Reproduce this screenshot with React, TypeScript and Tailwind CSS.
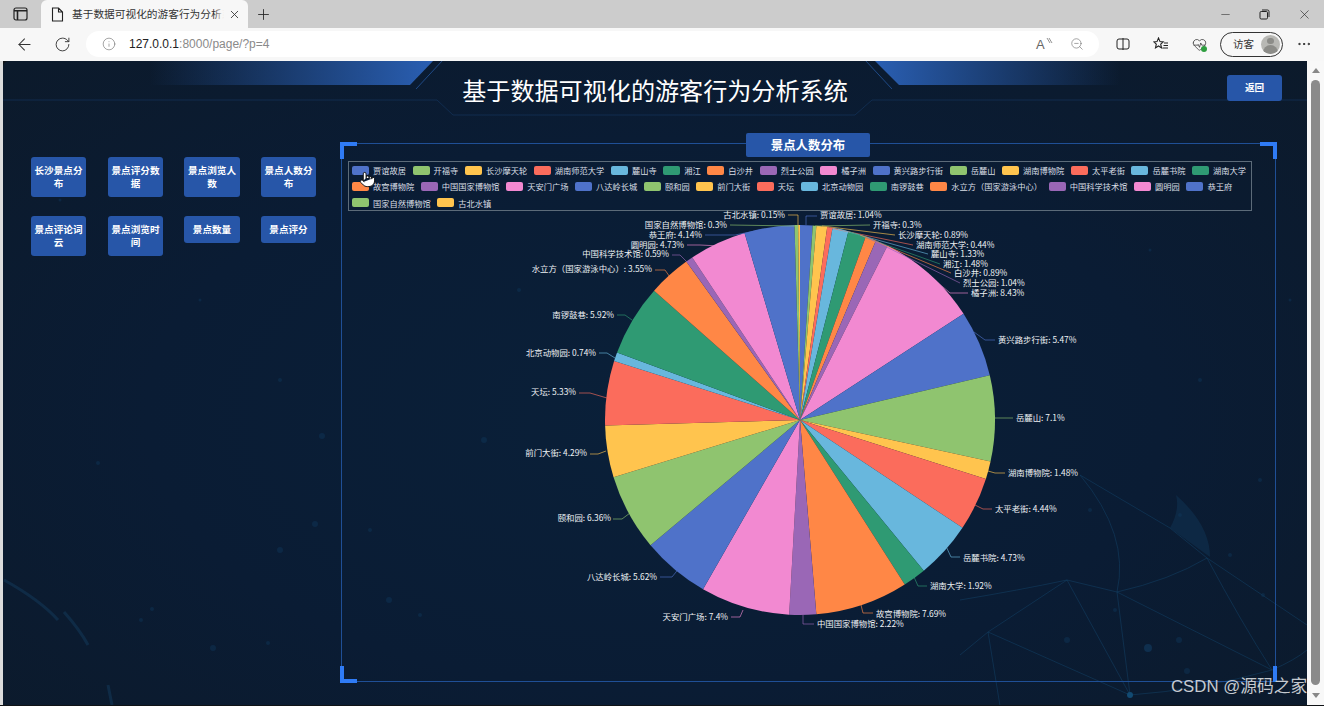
import React from "react";
import { ArrowLeft, RotateCw, Info, X, Plus, Minus, ZoomOut, MoreHorizontal, HeartPulse, Pointer } from "lucide-react";

const COLORS = ["#4f72c9", "#8fc46f", "#ffc44e", "#fb6c5c", "#68b7dd", "#2f9a73", "#ff8746", "#9a67b6", "#f289d1"];

type L = { n: string; v: number; x: number; y: number; a: "start" | "end"; p: string };
const DATA: L[] = [
  { n: "贾谊故居", v: 1.04, x: 820, y: 215, a: "start", p: "806,225 806,216 817,216" },
  { n: "开福寺", v: 0.3, x: 873, y: 225, a: "start", p: "815,226 870,225" },
  { n: "长沙摩天轮", v: 0.89, x: 898, y: 235, a: "start", p: "822,226 895,235" },
  { n: "湖南师范大学", v: 0.44, x: 916, y: 244.5, a: "start", p: "830,228 913,245" },
  { n: "麓山寺", v: 1.33, x: 931, y: 254, a: "start", p: "838,229 928,254" },
  { n: "湘江", v: 1.48, x: 943, y: 264, a: "start", p: "850,232 940,264" },
  { n: "白沙井", v: 0.89, x: 954, y: 273, a: "start", p: "860,235 951,273" },
  { n: "烈士公园", v: 1.04, x: 963, y: 283, a: "start", p: "868,238 960,283" },
  { n: "橘子洲", v: 8.43, x: 971, y: 293, a: "start", p: "915,263 950,293 968,293" },
  { n: "黄兴路步行街", v: 5.47, x: 998, y: 340, a: "start", p: "974,332 985,340 995,340" },
  { n: "岳麓山", v: 7.1, x: 1016, y: 418, a: "start", p: "995,418 1013,418" },
  { n: "湖南博物院", v: 1.48, x: 1008, y: 473, a: "start", p: "988,471 995,473 1005,473" },
  { n: "太平老街", v: 4.44, x: 995, y: 509, a: "start", p: "975,505 983,509 992,509" },
  { n: "岳麓书院", v: 4.73, x: 963, y: 558, a: "start", p: "945,544 951,557 960,557" },
  { n: "湖南大学", v: 1.92, x: 930, y: 586, a: "start", p: "914,577 918,586 927,586" },
  { n: "故宫博物院", v: 7.69, x: 876, y: 614, a: "start", p: "861,605 863,613 873,613" },
  { n: "中国国家博物馆", v: 2.22, x: 817, y: 624, a: "start", p: "803,615 803,624 814,624" },
  { n: "天安门广场", v: 7.4, x: 728, y: 617, a: "end", p: "743,610 740,617 731,617" },
  { n: "八达岭长城", v: 5.62, x: 657, y: 577, a: "end", p: "680,567 672,577 660,577" },
  { n: "颐和园", v: 6.36, x: 611, y: 518, a: "end", p: "630,513 622,519 613,519" },
  { n: "前门大街", v: 4.29, x: 587, y: 453, a: "end", p: "606,451 598,454 590,454" },
  { n: "天坛", v: 5.33, x: 576, y: 392, a: "end", p: "607,398 590,393 579,393" },
  { n: "北京动物园", v: 0.74, x: 596, y: 353, a: "end", p: "615,358 607,353 599,353" },
  { n: "南锣鼓巷", v: 5.92, x: 614, y: 315, a: "end", p: "632,320 625,315 617,315" },
  { n: "水立方（国家游泳中心）", v: 3.55, x: 652, y: 269, a: "end", p: "672,280 665,270 655,270" },
  { n: "中国科学技术馆", v: 0.59, x: 669, y: 254, a: "end", p: "690,265 680,255 672,255" },
  { n: "圆明园", v: 4.73, x: 684, y: 245, a: "end", p: "720,246 700,245 687,245" },
  { n: "恭王府", v: 4.14, x: 702, y: 235, a: "end", p: "765,229 735,235 705,235" },
  { n: "国家自然博物馆", v: 0.3, x: 727, y: 225, a: "end", p: "795,226 730,225" },
  { n: "古北水镇", v: 0.15, x: 785, y: 215, a: "end", p: "798,225 798,215 788,215" },
];

const CX = 800, CY = 420, R = 195;
const total = DATA.reduce((s, d) => s + d.v, 0);
const pt = (t: number) => {
  const a = (t / total) * Math.PI * 2;
  return `${(CX + R * Math.sin(a)).toFixed(2)} ${(CY - R * Math.cos(a)).toFixed(2)}`;
};
let acc = 0;
const SLICES = DATA.map((d, i) => {
  const s = acc;
  acc += d.v;
  const large = d.v / total > 0.5 ? 1 : 0;
  return { d: `M${CX} ${CY}L${pt(s)}A${R} ${R} 0 ${large} 1 ${pt(acc)}Z`, c: COLORS[i % 9] };
});

const BTN = "bg-[#2756a8] rounded-[3px] text-white font-bold text-[9.6px] leading-[13.5px] text-center px-[3px] flex items-center justify-center";
const FONT = "font-['Noto_Sans_CJK_SC','Noto_Sans',sans-serif]";

const NAV = [
  { t: "长沙景点分布", c: "h-[40px] w-[55px]" },
  { t: "景点评分数据", c: "h-[40px] w-[55px]" },
  { t: "景点浏览人数", c: "h-[40px] w-[56px]" },
  { t: "景点人数分布", c: "h-[40px] w-[55px]" },
  { t: "景点评论词云", c: "h-[40px] w-[55px]" },
  { t: "景点浏览时间", c: "h-[40px] w-[55px]" },
  { t: "景点数量", c: "h-[27px] w-[56px]" },
  { t: "景点评分", c: "h-[27px] w-[55px]" },
];

const STARS: [number, number, number][] = [
  [322, 436, 3], [315, 524, 3], [280, 550, 3], [152, 609, 2], [141, 620, 2], [213, 648, 3], [268, 643, 2], [98, 463, 2], [484, 440, 3],
  [389, 600, 3], [420, 615, 2], [370, 530, 2], [519, 290, 2], [1260, 480, 2], [1090, 510, 2], [1180, 515, 2], [1230, 555, 2], [1263, 595, 2],
  [1067, 640, 3], [1179, 640, 3], [1187, 671, 3], [1115, 610, 2], [60, 200, 1.5], [200, 300, 1.5], [280, 380, 2], [1290, 300, 1.5], [1150, 250, 1.5], [1200, 380, 2],
];

function Corner({ cls }: { cls: string }) {
  return <div className={`absolute w-[17px] h-[17px] border-[#2f7bf5] ${cls}`} />;
}

export default function App() {
  return (
    <div className={`w-[1324px] h-[706px] overflow-hidden flex flex-col bg-[#101316] relative ${FONT}`}>
      {/* tab strip */}
      <div className="h-[28px] bg-[#cccccc] flex items-stretch shrink-0">
        <div className="w-[41px] flex items-center justify-center">
          <svg width="15" height="14" viewBox="0 0 15 14" fill="none" stroke="#222" strokeWidth="1.2">
            <rect x="1" y="1" width="13" height="12" rx="2" />
            <path d="M1 3.8h13M4.5 3.8V13" strokeWidth="1.6" />
          </svg>
        </div>
        <div className="w-[207px] bg-[#f7f7f7] rounded-t-[6px] flex items-center pl-[10px]">
          <svg width="13" height="15" viewBox="0 0 13 15" fill="none" stroke="#222" strokeWidth="1.1" className="mr-[8px] shrink-0">
            <path d="M1.5 1h6l4 4v9h-10zM7.5 1v4h4" />
          </svg>
          <div className="relative w-[152px] overflow-hidden whitespace-nowrap text-[10.7px] text-[#333] shrink-0">
            基于数据可视化的游客行为分析系统
            <div className="absolute right-0 top-0 bottom-0 w-[10px] bg-gradient-to-r from-transparent to-[#f7f7f7]" />
          </div>
          <X size={13} strokeWidth={1.6} color="#333" className="ml-[4px] shrink-0" />
        </div>
        <div className="w-[30px] flex items-center justify-center">
          <Plus size={17} strokeWidth={1.2} color="#222" />
        </div>
        <div className="flex-1" />
        <div className="w-[39.5px] flex items-center justify-center"><Minus size={13} strokeWidth={1} color="#222" /></div>
        <div className="w-[39.5px] flex items-center justify-center">
          <svg width="11" height="11" viewBox="0 0 11 11" fill="none" stroke="#222" strokeWidth="1">
            <rect x="1" y="2.5" width="7.5" height="7.5" rx="1.2" />
            <path d="M3 1h5.5A1.5 1.5 0 0 1 10 2.5V8" />
          </svg>
        </div>
        <div className="w-[39.5px] flex items-center justify-center"><X size={15} strokeWidth={1} color="#222" /></div>
      </div>
      {/* address row */}
      <div className="h-[33px] bg-[#f7f7f7] flex items-center pl-[5px] pb-[1px] shrink-0">
        <div className="w-[38px] flex justify-center"><ArrowLeft size={19} strokeWidth={1.3} color="#333" /></div>
        <div className="w-[38px] flex justify-center"><RotateCw size={17} strokeWidth={1.3} color="#333" /></div>
        <div className="ml-[5px] w-[1013px] h-[26px] bg-white rounded-full flex items-center pl-[16px]">
          <Info size={14} strokeWidth={1} color="#666" />
          <div className="ml-[13px] text-[12px] font-['Liberation_Sans',sans-serif]">
            <span className="text-[#222]">127.0.0.1</span>
            <span className="text-[#8a8a8a]">:8000/page/?p=4</span>
          </div>
          <div className="flex-1" />
          <div className="w-[14px] relative text-[13px] leading-none text-[#666] font-['Liberation_Sans',sans-serif]">A</div>
          <svg width="7" height="8" viewBox="0 0 7 8" fill="none" stroke="#777" strokeWidth="0.8" className="mb-[6px] -ml-[4px]">
            <path d="M1 1l3 5M3 1l3 5" />
          </svg>
          <ZoomOut size={14} strokeWidth={1} color="#666" className="ml-[17px] mr-[15px]" />
        </div>
        <div className="ml-[5px] w-[38px] flex justify-center">
          <svg width="14" height="14" viewBox="0 0 14 14" fill="none" stroke="#222" strokeWidth="1">
            <rect x="1" y="2" width="12" height="10" rx="2" />
            <path d="M7 1v12" />
          </svg>
        </div>
        <div className="w-[38px] flex justify-center">
          <svg width="16" height="14" viewBox="0 0 16 14" fill="none" stroke="#222" strokeWidth="1.1">
            <path d="M5.5 1l1.5 3.6 3.2.3-2.5 2.3.8 3.7-3-1.9-3 1.9.8-3.7L.9 4.9l3.1-.3zM11 6h4M10.5 8.5h4.5M9.5 11h5.5" />
          </svg>
        </div>
        <div className="w-[38px] flex justify-center relative">
          <HeartPulse size={15} strokeWidth={1.1} color="#222" />
          <div className="absolute left-[21px] top-[9px] w-[6px] h-[6px] rounded-full bg-[#2e9e3f]" />
        </div>
        <div className="ml-[2px] w-[63px] h-[25px] border border-[#333] rounded-full flex items-center pl-[12px] text-[10.5px] text-[#333]">
          访客
          <div className="ml-[7px] w-[19px] h-[19px] rounded-full bg-[#b8b8b4] flex flex-col items-center overflow-hidden">
            <div className="mt-[3px] w-[7px] h-[7px] rounded-full bg-[#8c8c88]" />
            <div className="mt-[1px] w-[15px] h-[10px] rounded-t-full bg-[#8c8c88]" />
          </div>
        </div>
        <div className="ml-[2px] w-[38px] flex justify-center"><MoreHorizontal size={16} strokeWidth={1.5} color="#222" /></div>
      </div>
      {/* body */}
      <div className="h-[644px] flex shrink-0">
        <div className="w-[3px] bg-[#dcdcdc] shrink-0" />
        <div className="w-[1304px] relative rounded-tl-[6px] overflow-hidden bg-[radial-gradient(ellipse_at_50%_55%,#0a2039_0%,#0a1c34_55%,#0c1a2b_100%)]">
          {/* decorative background */}
          <svg className="absolute inset-0" width="1304" height="644" viewBox="3 61 1304 644" fill="none">
            <defs>
              <linearGradient id="hl" x1="0" x2="1" y1="0" y2="0">
                <stop offset="0" stopColor="#2a5fb3" stopOpacity="0" />
                <stop offset="1" stopColor="#2a5fb3" />
              </linearGradient>
              <linearGradient id="hr" x1="1" x2="0" y1="0" y2="0">
                <stop offset="0" stopColor="#2a5fb3" stopOpacity="0" />
                <stop offset="1" stopColor="#2a5fb3" />
              </linearGradient>
            </defs>
            <polygon points="150,60 434,60 410,85 150,85" fill="url(#hl)" />
            <polygon points="874,60 899,85 1120,85 1120,60" fill="url(#hr)" />
            <path d="M443 60L416 89M865 60L892 89" stroke="#1f4a86" />
            <path d="M3 100H437L453 115H855L872 100H1307" stroke="#14345d" strokeOpacity="0.7" />
            <path d="M1067 580L1117 592L1272 670M1067 580L988 632L960 655M1067 580L1130 695M1117 592L1130 695M988 632L1130 695M988 632L1000 706M1130 695Q1200 690 1272 670Q1295 660 1307 650M1117 592Q1170 580 1207 558Q1240 620 1272 670M1080 475Q1130 535 1117 592M1080 475L1170 528L1207 558M1207 558L1307 625M960 600Q1020 590 1067 580" stroke="#123f64" strokeOpacity="0.55" />
            <path d="M1176 495Q1210 525 1210 557L1170 528Q1180 510 1176 495Z" fill="#0e2c48" fillOpacity="0.8" />
            <path d="M4 580Q40 600 58 620M64 612Q80 630 88 645M108 685L112 705" stroke="#10304c" strokeOpacity="0.8" strokeWidth="3" />
            <circle cx="1130" cy="695" r="3" fill="#124a72" />
            <circle cx="1148" cy="648" r="4" fill="#0f2f4e" />
            {STARS.map(([x, y, r], i) => (
              <circle key={i} cx={x} cy={y} r={r} fill="#10375a" fillOpacity="0.45" />
            ))}
          </svg>
          <div className="relative flex flex-col">
            {/* header */}
            <div className="h-[82px] grid grid-cols-[1fr_auto_1fr]">
              <div />
              <div className="mt-[13px] text-[24.1px] leading-[32px] text-white self-start">基于数据可视化的游客行为分析系统</div>
              <div className="flex justify-end pr-[25px] pt-[14px] items-start">
                <button className={`${BTN} w-[55px] h-[26px] rounded-[2px]`}>返回</button>
              </div>
            </div>
            <div className="flex items-start">
              {/* nav */}
              <div className="w-[338px] shrink-0 pl-[28px] pt-[14px]">
                <div className="grid grid-cols-[77px_76px_77px_55px] gap-y-[19px] items-start">
                  {NAV.map((b) => (
                    <div key={b.t} className={`${BTN} ${b.c}`}>{b.t}</div>
                  ))}
                </div>
              </div>
              {/* chart frame */}
              <div className="relative w-[935px] h-[539px] border border-[#1f4f96] pt-[17px] pl-[6px]">
                <Corner cls="-left-[2px] -top-[2px] border-l-[4px] border-t-[4px]" />
                <Corner cls="-right-[2px] -top-[2px] border-r-[4px] border-t-[4px]" />
                <Corner cls="-left-[2px] -bottom-[2px] border-l-[4px] border-b-[4px]" />
                <div className="absolute -right-[2px] -bottom-[1px] w-[4px] h-[16px] bg-[#2f7bf5]" />
                <div className="absolute left-[404px] -top-[11px] w-[124px] h-[24px] bg-[#2756a8] rounded-[2px] flex items-center justify-center text-white font-bold text-[12.4px]">景点人数分布</div>
                <div className="w-[904px] h-[50px] border border-[#5c6b79] pl-[3px] flex flex-wrap content-start gap-x-[6.6px]">
                  {DATA.map((d, i) => (
                    <div key={d.n} className="h-[16.3px] flex items-center">
                      <div className="w-[17px] h-[9px] rounded-[2px] mr-[4px]" style={{ backgroundColor: COLORS[i % 9] }} />
                      <span className="text-[8.25px] leading-none text-[#d9dfe6] whitespace-nowrap">{d.n}</span>
                    </div>
                  ))}
                </div>
                <svg className="block -ml-[6px] overflow-visible" width="933" height="471" viewBox="342 211 933 471" fill="none">
                  {SLICES.map((s, i) => (
                    <path key={i} d={s.d} fill={s.c} />
                  ))}
                  {DATA.map((d, i) => (
                    <g key={d.n}>
                      <polyline points={d.p} stroke={COLORS[i % 9]} strokeOpacity="0.8" strokeWidth="0.8" fill="none" />
                      <text x={d.x} y={d.y + 3} textAnchor={d.a} fontSize="8.4" fill="#eef1f4">{`${d.n}: ${d.v}%`}</text>
                    </g>
                  ))}
                </svg>
              </div>
            </div>
          </div>
          <div className="absolute left-[356px] top-[110px]">
            <Pointer size={17} fill="#fff" stroke="#111" strokeWidth={1.4} />
          </div>
          <div className="absolute left-[1168px] top-[614px] text-[16.8px] leading-[24px] text-[#c5cad0] whitespace-nowrap font-['Liberation_Sans','Noto_Sans_CJK_SC',sans-serif]">CSDN @源码之家</div>
        </div>
        {/* scrollbar */}
        <div className="w-[17px] bg-[#f8f8f8] flex flex-col items-center pt-[7px] shrink-0">
          <div className="w-0 h-0 border-x-[4px] border-x-transparent border-b-[5px] border-b-[#888]" />
          <div className="mt-[7px] w-[9px] h-[605px] rounded-full bg-[#8a8a8a]" />
          <div className="mt-[8px] w-0 h-0 border-x-[4px] border-x-transparent border-t-[5px] border-t-[#888]" />
        </div>
      </div>
    </div>
  );
}
